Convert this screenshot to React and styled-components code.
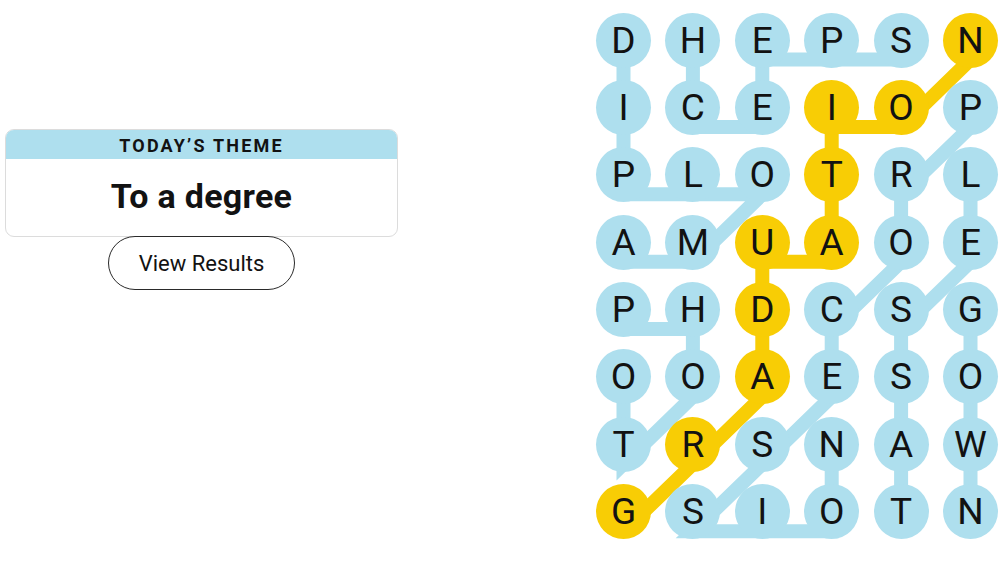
import React from 'react'
import styled, { createGlobalStyle } from 'styled-components'

const BLUE = '#aedfee'
const YELLOW = '#f8cd05'

const GlobalStyle = createGlobalStyle`
    body {
        margin: 0;
        background: #fff;
        font-family: Roboto, "Liberation Sans", sans-serif;
        color: #121212;
    }
`

const GRID = [
    'DHEPSN',
    'ICEIOP',
    'PLOTRL',
    'AMUAOE',
    'PHDCSG',
    'OOAESO',
    'TRSNAW',
    'GSIOTN',
]

const WORDS = [
    [[0, 0], [1, 0], [2, 0], [2, 1], [2, 2], [3, 1], [3, 0]],
    [[0, 4], [0, 3], [0, 2], [1, 2], [1, 1], [0, 1]],
    [[1, 5], [2, 4], [3, 4], [4, 3], [5, 3], [6, 2], [7, 1], [7, 2], [7, 3], [6, 3]],
    [[7, 4], [6, 4], [5, 4], [4, 4], [3, 5], [2, 5]],
    [[4, 5], [5, 5], [6, 5], [7, 5]],
    [[4, 0], [4, 1], [5, 1], [6, 0], [5, 0]],
]

const SPANGRAM = [[7, 0], [6, 1], [5, 2], [4, 2], [3, 2], [3, 3], [2, 3], [1, 3], [1, 4], [0, 5]]

const SIZE = 55
const COL_STEP = 69.4
const ROW_STEP = 67.4
const LINE_DROP = 19

const toPoints = path => path
    .map(([r, c]) => `${SIZE / 2 + c * COL_STEP},${SIZE / 2 + r * ROW_STEP + LINE_DROP}`)
    .join(' ')

const Page = styled.main`
    display: flex;
    align-items: flex-start;
`

const ThemeColumn = styled.section`
    width: 393px;
    margin: 129px 0 0 5px;
    display: flex;
    flex-direction: column;
    align-items: center;
`

const ThemeCard = styled.div`
    width: 100%;
    box-sizing: border-box;
    border: 1px solid #dcdcdc;
    border-radius: 9px;
    overflow: hidden;
`

const ThemeHeader = styled.div`
    height: 29px;
    background: ${BLUE};
    display: flex;
    align-items: center;
    justify-content: center;
    padding-top: 2px;
    box-sizing: border-box;
    font-size: 18px;
    font-weight: 700;
    letter-spacing: 2.2px;
    text-transform: uppercase;
    color: #121212;
`

const ThemeTitle = styled.h1`
    margin: 0;
    height: 77px;
    display: flex;
    align-items: center;
    justify-content: center;
    padding-bottom: 4px;
    box-sizing: border-box;
    font-size: 34px;
    font-weight: 700;
    letter-spacing: 0.3px;
    color: #121212;
`

const ResultsButton = styled.button`
    width: 187px;
    height: 54px;
    margin-top: -1px;
    border: 1px solid #2a2a2a;
    border-radius: 27px;
    background: #fff;
    font-family: Roboto, "Liberation Sans", sans-serif;
    font-size: 22px;
    color: #121212;
    padding: 0;
`

const Board = styled.div`
    position: relative;
    margin: 12.5px 0 0 198px;
    display: grid;
    grid-template-columns: repeat(6, ${SIZE}px);
    grid-auto-rows: ${SIZE}px;
    column-gap: ${COL_STEP - SIZE}px;
    row-gap: ${ROW_STEP - SIZE}px;
`

const Lines = styled.svg`
    position: absolute;
    inset: 0;
    width: 100%;
    height: 100%;
    overflow: visible;
    pointer-events: none;
`

const Cell = styled.div`
    position: relative;
    z-index: 1;
    width: ${SIZE}px;
    height: ${SIZE}px;
    border-radius: 50%;
    background: ${props => props.$spangram ? YELLOW : BLUE};
    display: flex;
    align-items: center;
    justify-content: center;
    font-size: 37px;
    line-height: 1;
    font-weight: 400;
    color: #121212;
`

const isSpangram = (r, c) => SPANGRAM.some(([sr, sc]) => sr === r && sc === c)

export default function App() {
    return (
        <>
            <GlobalStyle />
            <Page>
                <ThemeColumn>
                    <ThemeCard>
                        <ThemeHeader>Today’s Theme</ThemeHeader>
                        <ThemeTitle>To a degree</ThemeTitle>
                    </ThemeCard>
                    <ResultsButton>View Results</ResultsButton>
                </ThemeColumn>
                <Board>
                    <Lines>
                        {WORDS.map((w, i) => (
                            <polyline key={i} points={toPoints(w)} fill="none" stroke={BLUE} strokeWidth="14" />
                        ))}
                        <polyline points={toPoints(SPANGRAM)} fill="none" stroke={YELLOW} strokeWidth="14" />
                    </Lines>
                    {GRID.map((row, r) => row.split('').map((ch, c) => (
                        <Cell key={`${r}-${c}`} $spangram={isSpangram(r, c)}>{ch}</Cell>
                    )))}
                </Board>
            </Page>
        </>
    )
}
